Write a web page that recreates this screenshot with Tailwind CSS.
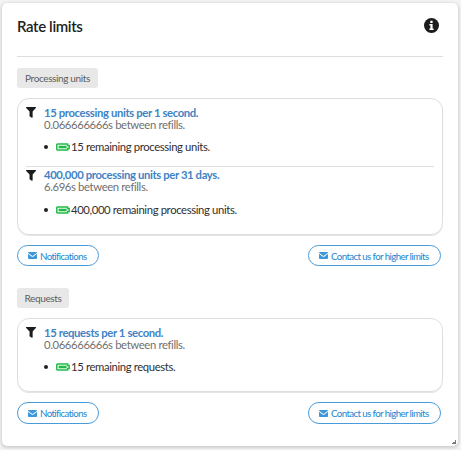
<!DOCTYPE html>
<html lang="en">
<head>
<meta charset="utf-8">
<title>Rate limits</title>
<script src="https://cdn.jsdelivr.net/npm/@tailwindcss/browser@4"></script>
</head>
<body class="h-[450px] w-[461px] overflow-hidden bg-[#f3f3f3] pl-[2px] pt-[3px] font-[Lato,sans-serif] text-[11.300px] leading-[12px] tracking-[-0.370px] text-[#303030]">
<svg class="hidden">
  <symbol id="funnel" viewBox="0 0 11 12"><path fill="#1b1c1d" d="M.6 0h9.800c.6 0 .8.6.4 1L7.300 4.900V11.300c0 .5-.5.700-.9.400L4.200 10.400a.7.700 0 0 1-.3-.6V4.900L.2 1C-.2.600 0 0 .6 0z"/></symbol>
  <symbol id="battery" viewBox="0 0 14 8"><path fill="none" stroke="#21ba45" stroke-width="1.500" d="M1.500 1h10.100v1.500h1.600v2.900h-1.600V7H1.500q-.7 0-.7-.7V1.700q0-.7.7-.7z"/><path fill="#21ba45" d="M2.600 2.700h8v2.600h-8z"/></symbol>
  <symbol id="mail" viewBox="0 0 9 7"><path fill="#3f97db" d="M.8 0h7.400q.8 0 .8.800L5.300 3.600q-.8.600-1.600 0L0 .8Q0 0 .8 0zM0 1.800l3.200 2.500q1.300 1 2.600 0L9 1.800v4.400q0 .8-.8.800H.8Q0 7 0 6.200z"/></symbol>
</svg>
<main class="relative h-[443px] w-[456px] rounded-[5px] bg-white px-[15px] shadow-[0_1px_3px_1px_#cfcfcf]">
  <header class="flex h-[54px] items-start justify-between border-b border-[#dededf] pr-[4.500px] pt-[15px]">
    <h1 class="-mt-px text-[15px] font-semibold leading-[18px] text-[#212121]">Rate limits</h1>
    <svg class="size-[15px]" viewBox="0 0 15 15"><circle cx="7.500" cy="7.500" r="7.500" fill="#1b1c1d"/><path fill="#fff" d="M6.300 2.800h2.300V5H6.300zM5.400 6h3.200v4.500h1V12H5.400v-1.500h1v-3h-1z"/></svg>
  </header>
  <section class="pt-[11px]">
    <h2 class="flex h-[20px] w-[81px] items-center justify-center whitespace-nowrap rounded-[3px] bg-[#e8e8e8] text-[10px] text-[#5c5c5c]">Processing units</h2>
    <div class="mt-[10px] h-[137px] rounded-[12px] border border-[#dededf] px-[8px] pt-[8px] shadow-[0_1px_0_#e4e4e5]">
      <article class="flex h-[60px] border-b border-[#dededf]">
        <svg class="h-[11px] w-[10px]"><use href="#funnel"/></svg>
        <div class="pl-[8px]">
          <h3 class="font-bold text-[#4183c4]">15 processing units per 1 second.</h3>
          <p class="text-[#707070]">0.066666666s between refills.</p>
          <p class="flex items-center pt-[10px]"><span class="mr-[8px] size-[4px] rounded-full bg-[#212121]"></span><svg class="mr-[1px] h-[8px] w-[14px]"><use href="#battery"/></svg>15 remaining processing units.</p>
        </div>
      </article>
      <article class="flex pt-[2px]">
        <svg class="mt-px h-[11px] w-[10px]"><use href="#funnel"/></svg>
        <div class="pl-[8px]">
          <h3 class="font-bold text-[#4183c4]">400,000 processing units per 31 days.</h3>
          <p class="text-[#707070]">6.696s between refills.</p>
          <p class="flex items-center pt-[11px]"><span class="mr-[8px] size-[4px] rounded-full bg-[#212121]"></span><svg class="mr-[1px] h-[8px] w-[14px]"><use href="#battery"/></svg>400,000 remaining processing units.</p>
        </div>
      </article>
    </div>
    <div class="mt-[10px] flex justify-between whitespace-nowrap pr-[2px] text-[9.700px] tracking-[-0.600px] text-[#2185d0]">
      <button class="flex h-[21px] w-[82px] items-center rounded-full border border-[#4a9bd9] pl-[10px]"><svg class="mr-[3px] h-[7px] w-[9px] shrink-0"><use href="#mail"/></svg>Notifications</button>
      <button class="flex h-[21px] w-[133px] items-center rounded-full border border-[#4a9bd9] pl-[10px]"><svg class="mr-[3px] h-[7px] w-[9px] shrink-0"><use href="#mail"/></svg>Contact us for higher limits</button>
    </div>
  </section>
  <section class="pt-[22px]">
    <h2 class="flex h-[20px] w-[52px] items-center justify-center rounded-[3px] bg-[#e8e8e8] text-[10px] text-[#5c5c5c]">Requests</h2>
    <div class="mt-[10px] h-[74px] rounded-[12px] border border-[#dededf] px-[8px] pt-[8px] shadow-[0_1px_0_#e4e4e5]">
      <article class="flex">
        <svg class="h-[11px] w-[10px]"><use href="#funnel"/></svg>
        <div class="pl-[8px]">
          <h3 class="font-bold text-[#4183c4]">15 requests per 1 second.</h3>
          <p class="text-[#707070]">0.066666666s between refills.</p>
          <p class="flex items-center pt-[10px]"><span class="mr-[8px] size-[4px] rounded-full bg-[#212121]"></span><svg class="mr-[1px] h-[8px] w-[14px]"><use href="#battery"/></svg>15 remaining requests.</p>
        </div>
      </article>
    </div>
    <div class="mt-[10px] flex justify-between whitespace-nowrap pr-[2px] text-[9.700px] tracking-[-0.600px] text-[#2185d0]">
      <button class="flex h-[22px] w-[82px] items-center rounded-full border border-[#4a9bd9] pl-[10px]"><svg class="mr-[3px] h-[7px] w-[9px] shrink-0"><use href="#mail"/></svg>Notifications</button>
      <button class="flex h-[22px] w-[133px] items-center rounded-full border border-[#4a9bd9] pl-[10px]"><svg class="mr-[3px] h-[7px] w-[9px] shrink-0"><use href="#mail"/></svg>Contact us for higher limits</button>
    </div>
  </section>
  <svg class="absolute bottom-[2px] right-[2px] size-[4px]" viewBox="0 0 4 4"><path fill="#777" d="M3 0h1v4H0V3h1V2h2z"/></svg>
</main>
</body>
</html>
